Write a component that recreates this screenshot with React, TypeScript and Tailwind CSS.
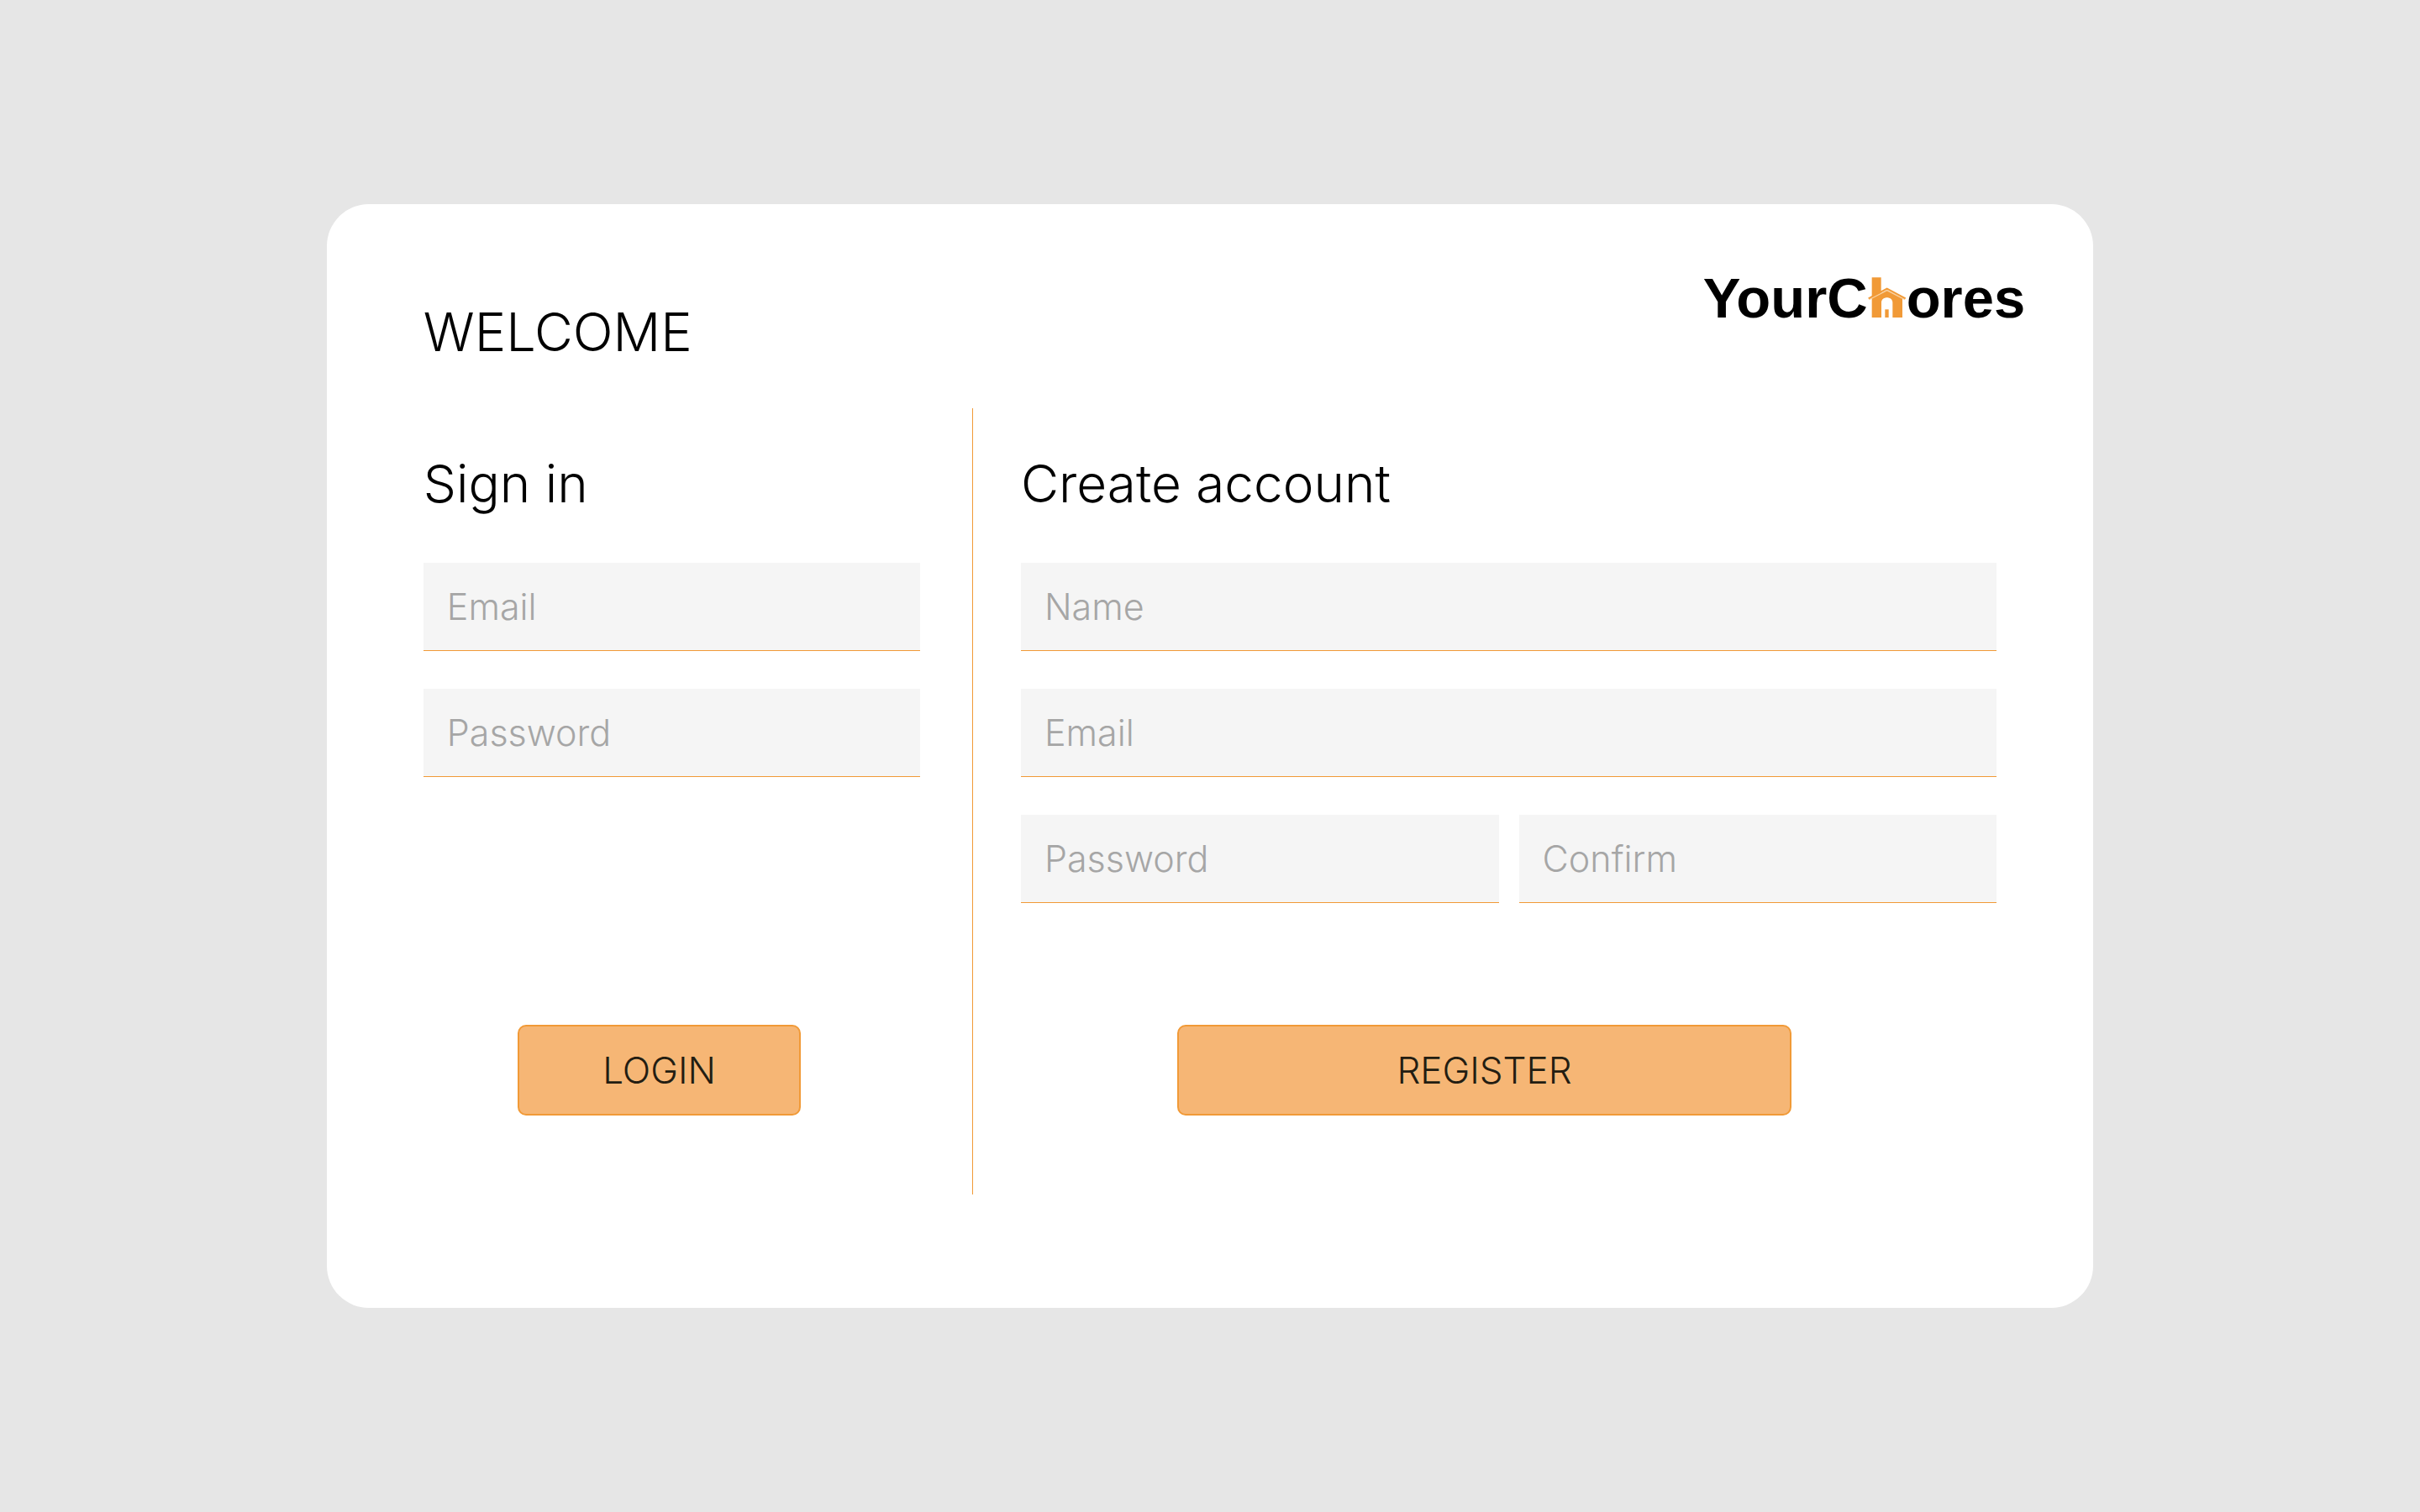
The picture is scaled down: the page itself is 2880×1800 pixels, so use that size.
import { useId } from "react";

type FieldProps = { label: string; type?: string };

/* The label lies inside the empty box and fades out once something is typed. */
function Field({ label, type = "text" }: FieldProps) {
  const id = useId();
  return (
    <div className="relative min-w-0 text-[43px] leading-[52px] font-light">
      <input
        id={id}
        type={type}
        placeholder=" "
        className="peer block h-[105px] w-full border-b border-[#f19a37] bg-[#f5f5f5] px-7 text-black outline-none"
      />
      <label
        htmlFor={id}
        className="pointer-events-none absolute inset-x-0 top-0 bottom-px flex items-center px-7 text-[#a6a6a6] peer-[:not(:placeholder-shown)]:opacity-0"
      >
        {label}
      </label>
    </div>
  );
}

/* The "h" of the logo: a house with a chimney, a pitched roof and a door. */
function HouseIcon() {
  return (
    <svg viewBox="0 0 138 147" className="h-[49px] w-[46px] shrink-0" aria-hidden="true">
      <path
        d="M14 4H47V60L68 49L123 78V147H88V94C88 70 48 70 48 94V147H14Z"
        fill="#f19a37"
      />
      <path d="M4 83L68 50L132 83" fill="none" stroke="#fad3a3" strokeWidth="4" />
      <path d="M2 79L68 44L134 79" fill="none" stroke="#f19a37" strokeWidth="6" />
      <path d="M61 118H74V147H61Z" fill="#f19a37" />
    </svg>
  );
}

function Logo() {
  return (
    <div
      role="img"
      aria-label="YourChores"
      className="flex items-baseline font-['Liberation_Sans',Arial,sans-serif] text-[67px] leading-[72px] font-bold text-black"
    >
      <span>YourC</span>
      <HouseIcon />
      <span>ores</span>
    </div>
  );
}

const subheading = "text-[62px] leading-[72px] font-light text-black";
const button =
  "h-[108px] cursor-pointer rounded-[10px] border-2 border-[#f19a37] bg-[#f6b675] text-[44px] font-light text-[#231d12]";

export default function App() {
  return (
    <main className="flex min-h-screen items-center justify-center bg-[#e6e6e6] font-[Inter,sans-serif]">
      <div className="flex min-h-[73vh] w-[73%] flex-col rounded-[50px] bg-white pb-[135px]">
        <header className="flex items-start justify-between pt-[76px] pr-[81px] pb-[55px] pl-[115px]">
          <h1 className="mt-10 text-[63px] leading-[72px] font-light text-black">WELCOME</h1>
          <Logo />
        </header>

        <div className="grid flex-1 grid-cols-[653fr_1219fr] px-[115px]">
          <form className="flex flex-col pt-[54px] pr-[62px] pb-[94px]">
            <h2 className={subheading}>Sign in</h2>
            <div className="mt-[58px] flex flex-col gap-[45px]">
              <Field label="Email" type="email" />
              <Field label="Password" type="password" />
            </div>
            <button type="button" className={`mt-auto ml-[19%] w-[57%] ${button}`}>
              LOGIN
            </button>
          </form>

          <form className="flex flex-col border-l border-[#f19a37] pt-[54px] pb-[94px] pl-[57px]">
            <h2 className={subheading}>Create account</h2>
            <div className="mt-[58px] flex flex-col gap-[45px]">
              <Field label="Name" />
              <Field label="Email" type="email" />
              <div className="grid grid-cols-2 gap-6">
                <Field label="Password" type="password" />
                <Field label="Confirm" type="password" />
              </div>
            </div>
            <button type="button" className={`mt-auto ml-[16%] w-[63%] ${button}`}>
              REGISTER
            </button>
          </form>
        </div>
      </div>
    </main>
  );
}
